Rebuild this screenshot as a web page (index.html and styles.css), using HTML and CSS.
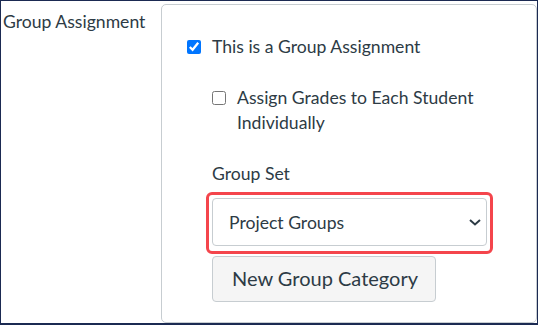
FILE: index.html
```html
<!DOCTYPE html>
<html lang="en">
<head>
    <meta charset="UTF-8">
    <meta name="viewport" content="width=device-width, initial-scale=1.0">
    <title>Group Assignment</title>
    <link rel="stylesheet" href="styles.css">
</head>
<body>
    <!-- Assignment settings row -->
    <div class="frame">
        <div class="row-label">Group Assignment</div>

        <div class="panel">
            <label class="check-row">
                <input type="checkbox" checked>
                <span>This is a Group Assignment</span>
            </label>

            <div class="sub-options">
                <label class="check-row">
                    <input type="checkbox">
                    <span>Assign Grades to Each Student Individually</span>
                </label>

                <div class="field-label">Group Set</div>

                <!-- Red outline marks the select -->
                <div class="highlight">
                    <div class="select-box">
                        <span>Project Groups</span>
                        <svg class="chevron" width="12" height="7" viewBox="0 0 12 7">
                            <path d="M1 1 L6 5.5 L11 1" fill="none" stroke="#2d3b45" stroke-width="2"/>
                        </svg>
                    </div>
                </div>

                <button class="btn">New Group Category</button>
            </div>
        </div>
    </div>
</body>
</html>
```

FILE: styles.css
```css
/* Page reset and base font */
body {
    margin: 0;
    font-family: Lato, "Open Sans", Arial, sans-serif;
    color: #2d3b45;
    background: white;
}

/* Outer dark frame around the screenshot */
.frame {
    box-sizing: border-box;
    width: 538px;
    height: 325px;
    border: 1px solid #1b2a52;
    border-bottom-width: 2px;
    display: flex;
    padding: 3px 0 0 0;
}

/* Left column label */
.row-label {
    width: 158px;
    padding: 5px 0 0 2px;
    font-size: 17.6px;
    line-height: 25px;
}

/* Bordered panel with the options */
.panel {
    flex: 1;
    border: 1px solid #c7cdd1;
    border-radius: 5px;
    padding: 29px 0 0 25px;
}

.check-row {
    display: flex;
    align-items: flex-start;
    gap: 11px;
    font-size: 17.6px;
    line-height: 25px;
}

.check-row input {
    width: 14px;
    height: 14px;
    margin: 6px 0 0 0;
    flex: none;
}

.sub-options {
    padding: 26px 0 0 25px;
}

.sub-options .check-row span {
    width: 250px;
}

.field-label {
    margin-top: 26px;
    font-size: 17.6px;
    line-height: 25px;
}

/* Annotation outline around the select */
.highlight {
    width: 275px;
    margin: 6px 0 0 -6px;
    padding: 3px 3px 5px 3px;
    border: 3px solid #f4454c;
    border-radius: 6px;
}

.select-box {
    box-sizing: border-box;
    height: 48px;
    border: 1px solid #c7cdd1;
    border-radius: 4px;
    display: flex;
    align-items: center;
    justify-content: space-between;
    padding: 0 5px 0 16px;
    font-size: 17.6px;
}

.btn {
    margin-top: 2px;
    box-sizing: border-box;
    width: 224px;
    height: 46px;
    background: #f5f5f5;
    border: 1px solid #c7cdd1;
    border-radius: 4px;
    font-family: inherit;
    font-size: 20px;
    color: #2d3b45;
    text-align: left;
    padding: 0 0 2px 19px;
}
```
